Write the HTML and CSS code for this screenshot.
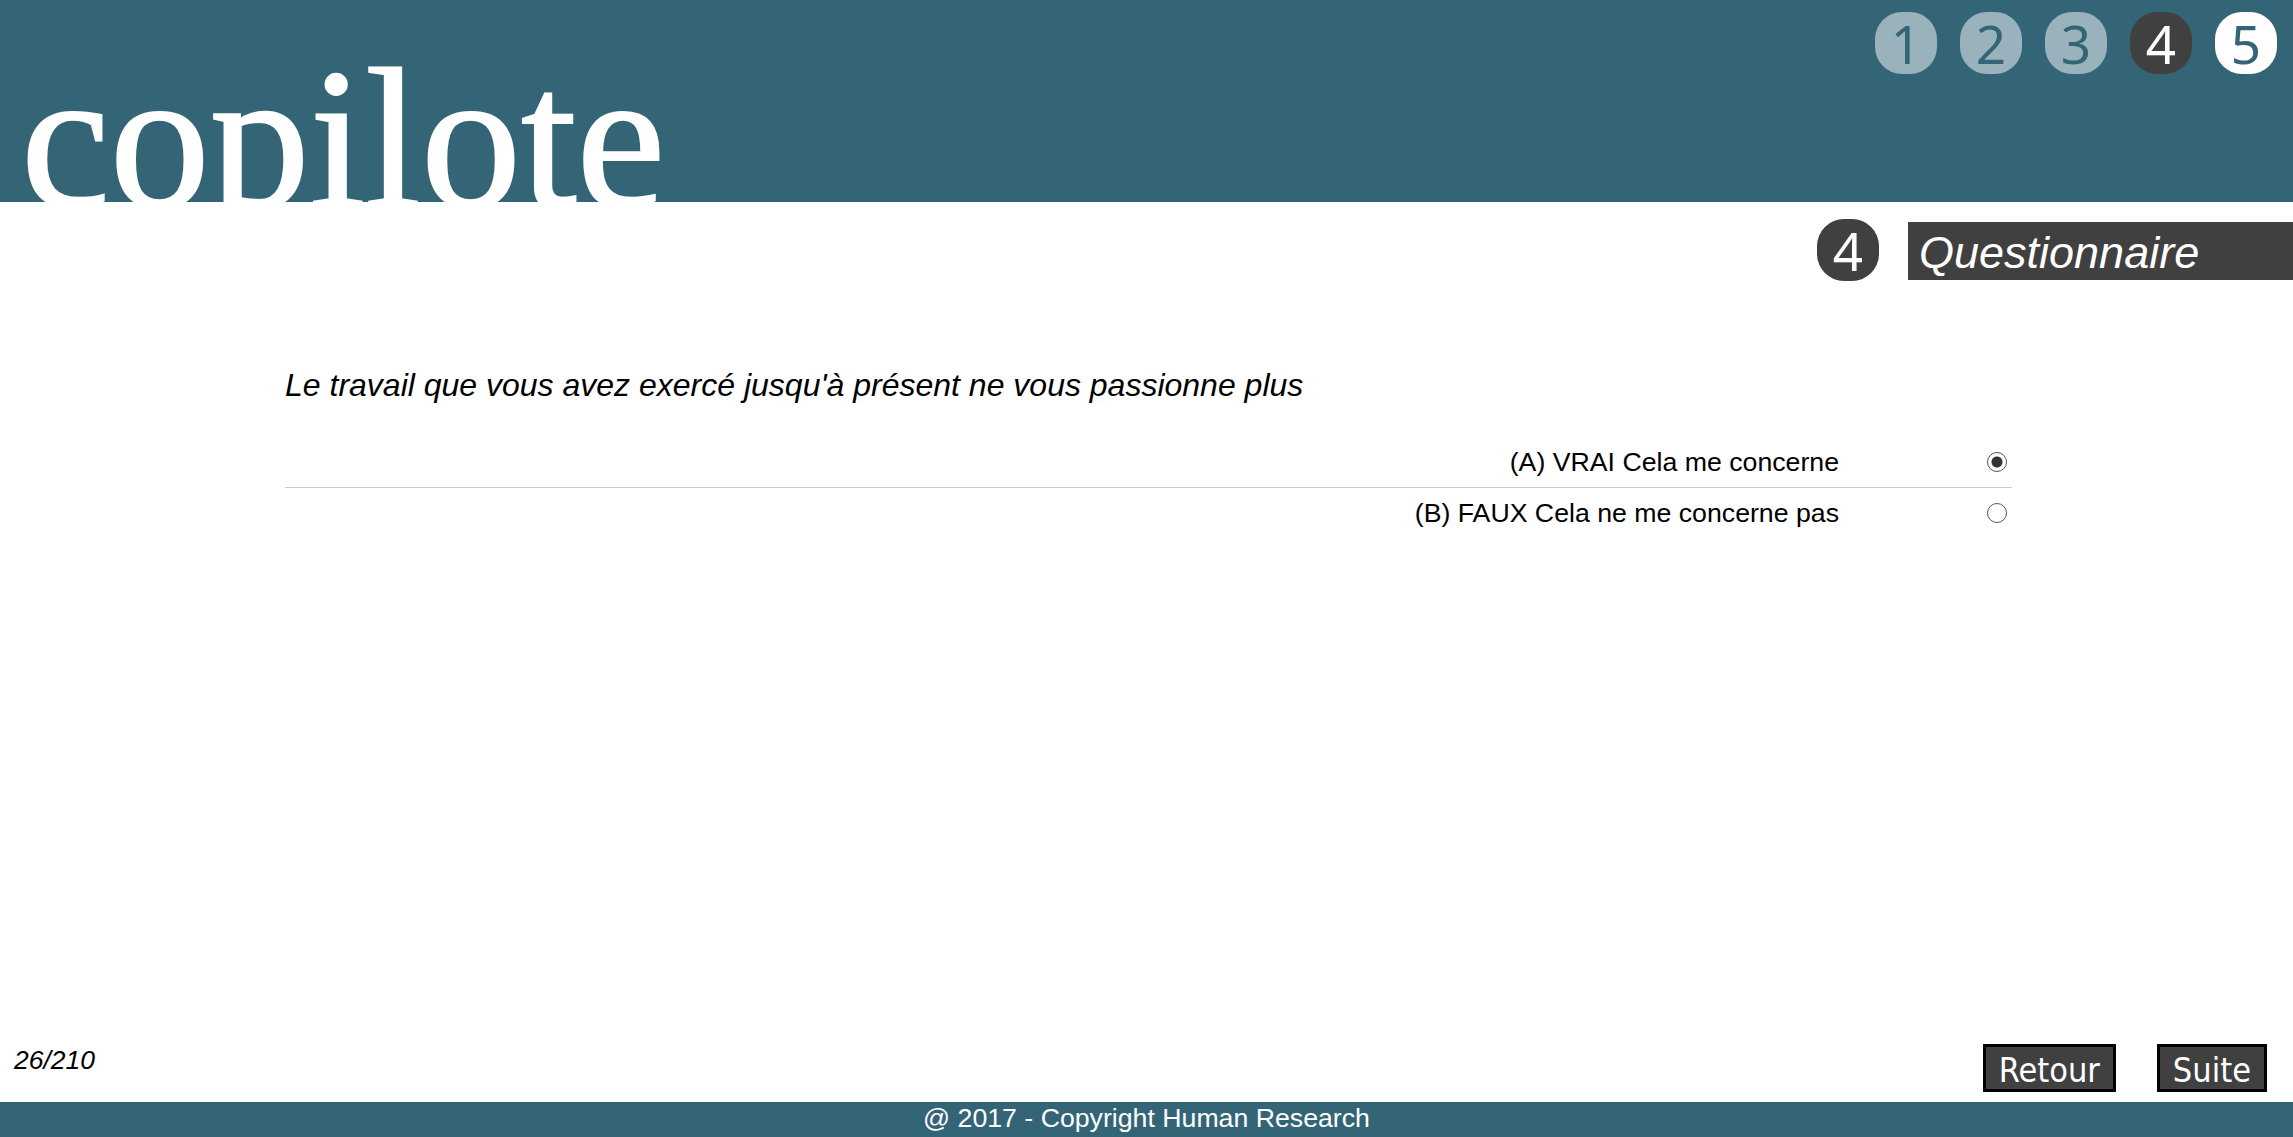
FILE: index.html
```html
<!DOCTYPE html>
<html lang="fr">
<head>
    <meta charset="UTF-8">
    <title>Copilote - Questionnaire</title>
    <link rel="stylesheet" href="styles.css">
</head>
<body>
    <div class="header">
        <div class="logo">copilote</div>
        <div class="steps">
            <div class="step step-done">1</div>
            <div class="step step-done">2</div>
            <div class="step step-done">3</div>
            <div class="step step-current">4</div>
            <div class="step step-next">5</div>
        </div>
    </div>

    <div class="section-title">
        <div class="step step-current">4</div>
        <div class="section-name">Questionnaire</div>
    </div>

    <div class="content">
        <p class="question">Le travail que vous avez exercé jusqu'à présent ne vous passionne plus</p>
        <label class="answer answer-first">
            <span class="answer-text">(A) VRAI Cela me concerne</span>
            <input type="radio" name="q26" checked>
        </label>
        <label class="answer">
            <span class="answer-text">(B) FAUX Cela ne me concerne pas</span>
            <input type="radio" name="q26">
        </label>
    </div>

    <div class="bottom">
        <div class="counter">26/210</div>
        <div class="buttons">
            <button class="nav-btn">Retour</button>
            <button class="nav-btn">Suite</button>
        </div>
    </div>

    <div class="footer">@ 2017 - Copyright Human Research</div>
</body>
</html>
```

FILE: styles.css
```css
html, body {
    height: 100%;
}
body {
    margin: 0;
    display: flex;
    flex-direction: column;
    font-family: "Liberation Sans", Arial, sans-serif;
    color: #000;
    background: #fff;
    overflow: hidden;
}
.header {
    height: 202px;
    flex: none;
    display: flex;
    justify-content: space-between;
    background: #346577;
    overflow: hidden;
}
.logo {
    margin: 39px 0 0 21px;
    font-family: "Liberation Serif", "Times New Roman", serif;
    font-size: 200px;
    line-height: 200px;
    color: #fff;
    -webkit-text-stroke: 2px #fff;
}
.steps {
    display: flex;
    gap: 23px;
    padding: 12px 16px 0 0;
}
.step {
    width: 62px;
    height: 62px;
    flex: none;
    border-radius: 27px;
    display: flex;
    align-items: center;
    justify-content: center;
    font-family: "Noto Sans", sans-serif;
    font-stretch: condensed;
    font-size: 53px;
    line-height: 1;
}
.step-done {
    background: #9ab2bc;
    color: #346577;
}
.step-current {
    background: #404040;
    color: #fff;
}
.step-next {
    background: #fff;
    color: #346577;
}
.section-title {
    display: flex;
    justify-content: flex-end;
    align-items: flex-start;
    gap: 29px;
    margin-top: 17px;
    flex: none;
}
.section-name {
    width: 385px;
    height: 58px;
    margin-top: 3px;
    box-sizing: border-box;
    padding-left: 11px;
    background: #404040;
    color: #fff;
    font-size: 45px;
    font-style: italic;
    line-height: 62px;
}
.content {
    flex: 1;
    width: 1727px;
    margin-left: 285px;
}
.question {
    margin: 86px 0 34px;
    font-size: 32px;
    font-style: italic;
    line-height: 36px;
}
.answer {
    height: 50px;
    display: flex;
    align-items: center;
    justify-content: flex-end;
    font-size: 26.7px;
}
.answer-first {
    border-bottom: 1px solid #ccc;
}
.answer-text {
    margin-right: 148px;
}
.answer input {
    appearance: none;
    width: 20px;
    height: 20px;
    margin: 0 5px 0 0;
    border: 1px solid #555;
    border-radius: 50%;
    background: #fff;
}
.answer input:checked {
    background: radial-gradient(circle, #333 0 5px, #fff 6px);
}
.bottom {
    flex: none;
    display: flex;
    justify-content: space-between;
    align-items: flex-start;
    padding: 0 26px 10px 14px;
}
.counter {
    margin-top: 1px;
    font-size: 26.5px;
    font-style: italic;
    line-height: 30px;
}
.buttons {
    display: flex;
    gap: 41px;
}
.nav-btn {
    height: 48px;
    padding: 4px 13px 0;
    border: 3px solid #000;
    background: #404040;
    color: #fff;
    font-family: "DejaVu Sans", sans-serif;
    font-stretch: condensed;
    font-size: 34px;
    line-height: 1;
}
.footer {
    height: 35px;
    flex: none;
    background: #346577;
    color: #fff;
    font-size: 26.7px;
    line-height: 33px;
    text-align: center;
}
```
